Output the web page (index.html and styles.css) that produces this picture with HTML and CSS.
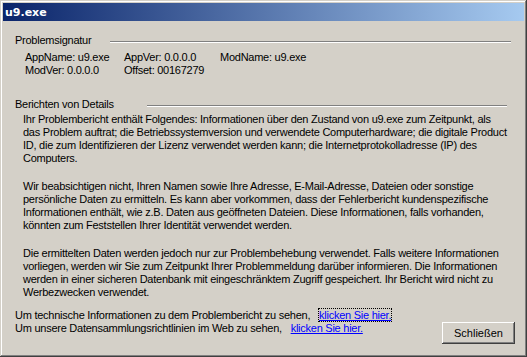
FILE: index.html
```html
<!DOCTYPE html>
<html lang="de">
<head>
<meta charset="utf-8">
<title>u9.exe</title>
<link rel="stylesheet" href="styles.css">
</head>
<body>
<div class="window">
  <div class="titlebar"><span class="title">u9.exe</span></div>
  <div class="content">
    <div class="group-head head-sig">
      <span class="label">Problemsignatur</span>
      <span class="rule"></span>
    </div>
    <div class="sig">
      <span>AppName: u9.exe</span><span>AppVer: 0.0.0.0</span><span>ModName: u9.exe</span>
      <span>ModVer: 0.0.0.0</span><span>Offset: 00167279</span>
    </div>

    <div class="group-head head-det">
      <span class="label">Berichten von Details</span>
      <span class="rule"></span>
    </div>
    <div class="details">
      <p>Ihr Problembericht enthält Folgendes: Informationen über den Zustand von u9.exe zum Zeitpunkt, als<br>das Problem auftrat; die Betriebssystemversion und verwendete Computerhardware; die digitale Product<br>ID, die zum Identifizieren der Lizenz verwendet werden kann; die Internetprotokolladresse (IP) des<br>Computers.</p>
      <p>Wir beabsichtigen nicht, Ihren Namen sowie Ihre Adresse, E-Mail-Adresse, Dateien oder sonstige<br>persönliche Daten zu ermitteln. Es kann aber vorkommen, dass der Fehlerbericht kundenspezifische<br>Informationen enthält, wie z.B. Daten aus geöffneten Dateien. Diese Informationen, falls vorhanden,<br>könnten zum Feststellen Ihrer Identität verwendet werden.</p>
      <p>Die ermittelten Daten werden jedoch nur zur Problembehebung verwendet. Falls weitere Informationen<br>vorliegen, werden wir Sie zum Zeitpunkt Ihrer Problemmeldung darüber informieren. Die Informationen<br>werden in einer sicheren Datenbank mit eingeschränktem Zugriff gespeichert. Ihr Bericht wird nicht zu<br>Werbezwecken verwendet.</p>
    </div>

    <div class="footer">
      <div class="links">
        <div>Um technische Informationen zu dem Problembericht zu sehen, <a href="#" class="link focus">klicken Sie hier.</a></div>
        <div>Um unsere Datensammlungsrichtlinien im Web zu sehen, <a href="#" class="link">klicken Sie hier.</a></div>
      </div>
      <button class="btn" type="button">Schließen</button>
    </div>
  </div>
</div>
</body>
</html>
```

FILE: styles.css
```css
html, body {
  margin: 0;
  padding: 0;
  background: #d4d0c8;
}
body {
  width: 527px;
  height: 357px;
  overflow: hidden;
  font-family: "Liberation Sans", Arial, sans-serif;
  font-size: 11px;
  line-height: 13px;
  letter-spacing: -0.25px;
  color: #000;
}
.window {
  box-sizing: border-box;
  width: 527px;
  height: 357px;
  padding: 3px;
  background: #d4d0c8;
  box-shadow:
    inset -1px -1px 0 #404040,
    inset 1px 1px 0 #d4d0c8,
    inset -2px -2px 0 #808080,
    inset 2px 2px 0 #ffffff;
  display: flex;
  flex-direction: column;
}
.titlebar {
  height: 18px;
  background: linear-gradient(to right, #0a246a, #a6caf0);
  display: flex;
  align-items: center;
  padding-left: 2px;
}
.title {
  color: #fff;
  font-family: "DejaVu Sans", Verdana, sans-serif;
  font-weight: bold;
  font-size: 11px;
  letter-spacing: 0;
}
.content {
  flex: 1;
  padding: 13px 9px 0 12px;
  display: flex;
  flex-direction: column;
}
.group-head {
  display: flex;
  align-items: center;
  height: 13px;
}
.group-head .label {
  flex: none;
}
.head-sig .label { width: 95px; }
.head-det .label { width: 132px; }
.group-head .rule {
  flex: 1;
  height: 0;
  margin-top: 2px;
  border-top: 1px solid #808080;
  border-bottom: 1px solid #ffffff;
}
.head-sig .rule { margin-right: 4px; }
.head-det .rule { margin-right: 8px; }
.sig {
  display: grid;
  grid-template-columns: 99px 96px auto;
  padding-left: 10px;
  margin-top: 4px;
}
.head-det {
  margin-top: 21px;
}
.details {
  padding-left: 8px;
  margin-top: 2px;
  white-space: nowrap;
}
.details p {
  margin: 0 0 15px 0;
}
.details p:last-child {
  margin-bottom: 0;
}
.footer {
  display: flex;
  align-items: flex-start;
  margin-top: 10px;
}
.links {
  flex: 1;
  white-space: nowrap;
}
.link {
  color: #0000ff;
  text-decoration: underline;
  margin-left: 6px;
}
.focus {
  outline: 1px dotted #000;
  outline-offset: 0;
}
.btn {
  margin-top: 13px;
  width: 73px;
  height: 22px;
  font-family: "Liberation Sans", Arial, sans-serif;
  font-size: 11px;
  letter-spacing: 0;
  color: #000;
  background: #d4d0c8;
  border: none;
  padding: 0;
  box-shadow:
    inset -1px -1px 0 #404040,
    inset 1px 1px 0 #ffffff,
    inset -2px -2px 0 #808080,
    inset 2px 2px 0 #d4d0c8;
}
```
